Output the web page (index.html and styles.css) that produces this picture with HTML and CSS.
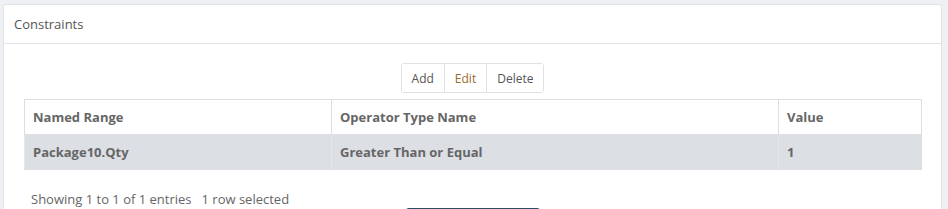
FILE: index.html
```html
<!DOCTYPE html>
<html lang="en">
<head>
    <meta charset="UTF-8">
    <title>Constraints</title>
    <link rel="stylesheet" href="styles.css">
</head>
<body>
    <div class="panel">
        <div class="panel-heading">Constraints</div>
        <div class="panel-body">
            <div class="toolbar">
                <div class="btn-group">
                    <button class="btn">Add</button>
                    <button class="btn btn-edit">Edit</button>
                    <button class="btn">Delete</button>
                </div>
            </div>
            <table class="grid">
                <thead>
                    <tr>
                        <th class="col-range">Named Range</th>
                        <th class="col-op">Operator Type Name</th>
                        <th>Value</th>
                    </tr>
                </thead>
                <tbody>
                    <tr class="selected">
                        <td>Package10.Qty</td>
                        <td>Greater Than or Equal</td>
                        <td>1</td>
                    </tr>
                </tbody>
            </table>
            <div class="info">Showing 1 to 1 of 1 entries<span class="select-info">1 row selected</span></div>
            <div class="footer-actions">
                <button class="btn-save" aria-label="Save"></button>
            </div>
        </div>
    </div>
</body>
</html>
```

FILE: styles.css
```css
body {
    margin: 0;
    padding: 4px 6px 0 3px;
    background-color: #eef0f4;
    font-family: "Open Sans", sans-serif;
    font-size: 13px;
    color: #666;
}
.panel {
    background: white;
    border: 1px solid #e1e3e6;
    border-radius: 3px;
}
.panel-heading {
    height: 38px;
    line-height: 39px;
    padding: 0 10px;
    color: #555;
    font-size: 13px;
    border-bottom: 1px solid #e1e3e6;
}
.panel-body {
    padding: 19px 20px 0 20px;
}
.toolbar {
    display: flex;
    justify-content: center;
    margin-bottom: 6px;
}
.btn-group {
    display: flex;
    border: 1px solid #dfe1e4;
    border-radius: 3px;
}
.btn {
    font-family: "Open Sans", sans-serif;
    font-size: 12px;
    color: #555;
    background: white;
    border: none;
    border-left: 1px solid #dfe1e4;
    height: 28px;
    padding: 0 10px;
}
.btn:first-child {
    border-left: none;
}
.btn-edit {
    color: #9a6a2f;
}
.grid {
    width: 898px;
    border-collapse: collapse;
    border: 1px solid #dcdee1;
}
.grid th,
.grid td {
    text-align: left;
    font-weight: bold;
    height: 34px;
    padding: 0 8px;
    border-left: 1px solid #dcdee1;
    color: #666;
}
.grid th {
    border-bottom: 1px solid #dcdee1;
}
.col-range {
    width: 290px;
}
.col-op {
    width: 430px;
}
.grid tr.selected td {
    background: #dcdfe4;
    border-left-color: #e4e6ea;
}
.info {
    padding: 20px 0 0 7px;
    line-height: 18px;
    color: #666;
}
.select-info {
    margin-left: 10px;
}
.footer-actions {
    display: flex;
    justify-content: center;
}
.btn-save {
    width: 134px;
    height: 30px;
    background: #2e4a66;
    border: none;
    border-radius: 3px;
}
```
